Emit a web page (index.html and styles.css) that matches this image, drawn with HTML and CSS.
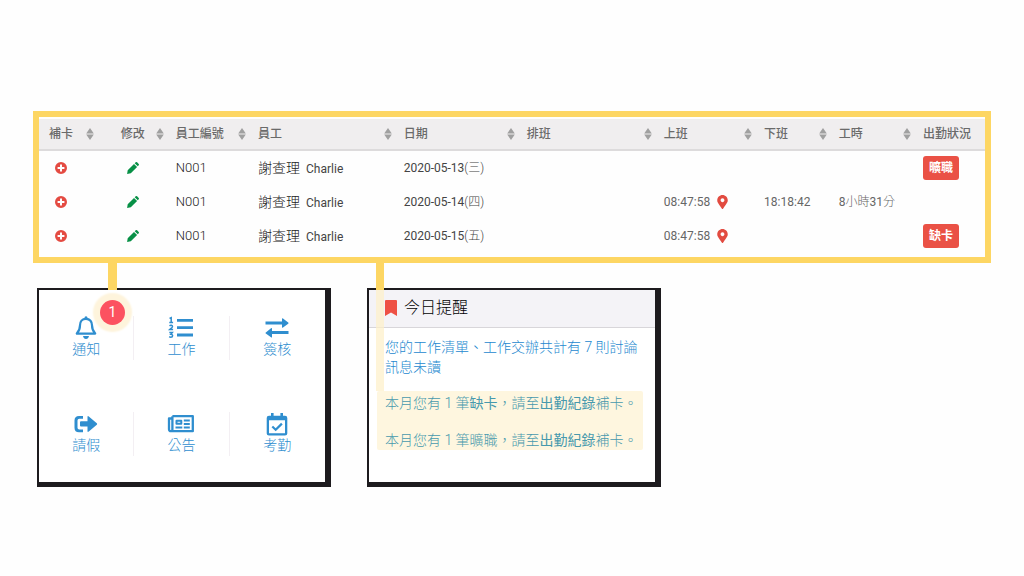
FILE: index.html
```html
<!DOCTYPE html>
<html lang="zh-Hant">
<head>
<meta charset="utf-8">
<meta name="viewport" content="width=device-width, initial-scale=1">
<title>出勤紀錄</title>
<link rel="stylesheet" href="styles.css">
</head>
<body>
<svg class="sprite" aria-hidden="true">
  <symbol id="sort" viewBox="0 0 8 12"><path d="M4 0L7.800 5.500H.2zM4 12L.2 6.500h7.600z"/></symbol>
  <symbol id="plus" viewBox="0 0 12 12"><path fill-rule="evenodd" d="M6 0a6 6 0 1 1 0 12A6 6 0 0 1 6 0zM5 2.600V5H2.600v2H5v2.400h2V7h2.400V5H7V2.600z"/></symbol>
  <symbol id="pencil" viewBox="0 0 12 12"><path d="M.1 11.900L.7 8.200 7 1.900l3.100 3.100L3.800 11.300zM7.700 1.200L8.700.3q.7-.6 1.400 0l1.600 1.600q.6.700 0 1.400L10.800 4.300z"/></symbol>
  <symbol id="pin" viewBox="0 0 384 512"><path fill-rule="evenodd" d="M172.268 501.670C26.970 291.031 0 269.413 0 192 0 85.961 85.961 0 192 0s192 85.961 192 192c0 77.413-26.970 99.031-172.268 309.670-9.535 13.774-29.930 13.773-39.464 0zM192 262c38.700 0 70-31.300 70-70s-31.300-70-70-70-70 31.300-70 70 31.300 70 70 70z"/></symbol>
  <symbol id="bell" viewBox="0 0 28 24"><path fill="none" stroke="currentColor" stroke-width="2.200" stroke-linejoin="round" d="M14 2.800c-4 0-6 3-6 6.400 0 4.300-1 6-3.200 8.400h18.400C21 15.200 20 13.500 20 9.200c0-3.400-2-6.400-6-6.400z"/><path d="M12.600 1q1.400-1.500 2.800 0v2h-2.800zM11 20h6q-.6 3-3 3t-3-3z"/></symbol>
  <symbol id="list" viewBox="0 0 28 24"><path d="M10 3h16v2.800H10zM10 10.300h16v2.800H10zM10 17.600h16v2.800H10z"/><path fill="none" stroke="currentColor" stroke-width="1.500" d="M2.500 2.400l1.700-.7v4.800M2.300 6.500h3.800M2.500 9.800c1.200-1 3-.6 3 .6 0 1-1 1.600-2.600 3h3.200M2.300 16.600h3l-1.400 1.700c2.300 0 2.300 2.900-.1 2.900-.7 0-1.200-.2-1.600-.5"/></symbol>
  <symbol id="swap" viewBox="0 0 28 24"><path d="M2.500 5.600H19V2.900q0-1.200 1-.4l5.200 4.100q.8.600 0 1.200L20 11.500q-1 .7-1-.4V8.600H2.500zM25.500 15H9v-2.200q0-1.300-1-.5l-5.200 4.100q-.8.600 0 1.200L8 21.300q1 .7 1-.4V18h16.500z"/></symbol>
  <symbol id="leave" viewBox="0 0 28 24"><path d="M11 4H7Q2.500 4 2.500 8.500v7.300q0 4.500 4.500 4.500h4v-2.800H7.300q-1.800 0-1.800-1.800V8.600q0-1.800 1.800-1.800H11z"/><path d="M9 9.300h6.500V5q0-1.600 1.300-.5l8 6.800q.8.700 0 1.400l-8 6.800q-1.300 1.100-1.300-.5v-4.500H9q-1 0-1-1v-3.200q0-1 1-1z"/></symbol>
  <symbol id="news" viewBox="0 0 28 24"><g fill="none" stroke="currentColor" stroke-width="2.300" stroke-linejoin="round"><path d="M5.400 4.200h20.400v15H4q-2 0-2-2V6.500h3.400M5.400 4.200v13q0 2-1.600 2"/><path stroke-width="2" d="M9.500 8.700h4.800v3.100H9.500zM16.800 8.500h6M16.800 12h6M8.500 15.500h6.800M16.800 15.500h6"/></g></symbol>
  <symbol id="calendar" viewBox="0 0 28 24"><path fill-rule="evenodd" d="M8 1h2.600v2.700h6.800V1H20v2.700h2q2.300 0 2.300 2.300v15.500q0 2-2.300 2H6q-2.300 0-2.300-2V6Q3.700 3.700 6 3.700h2zM6 8.200v13h16v-13z"/><path fill="none" stroke="currentColor" stroke-width="2.200" d="M9.300 14.500l3.400 3.300 6.200-6.200"/></symbol>
  <symbol id="bookmark" viewBox="0 0 12 16"><path d="M0 1Q0 0 1 0h10Q12 0 12 1V16l-6-3.500L0 16z"/></symbol>
</svg>

<main class="page">
  <section class="records">
    <table class="records-table">
      <colgroup>
        <col class="col-add"><col class="col-edit"><col class="col-id"><col class="col-name"><col class="col-date">
        <col class="col-shift"><col class="col-in"><col class="col-out"><col class="col-hours"><col class="col-status">
      </colgroup>
      <thead>
        <tr>
          <th><span class="head">補卡<svg class="sort"><use href="#sort"/></svg></span></th>
          <th><span class="head">修改<svg class="sort"><use href="#sort"/></svg></span></th>
          <th><span class="head">員工編號<svg class="sort"><use href="#sort"/></svg></span></th>
          <th><span class="head">員工<svg class="sort"><use href="#sort"/></svg></span></th>
          <th><span class="head">日期<svg class="sort"><use href="#sort"/></svg></span></th>
          <th><span class="head">排班<svg class="sort"><use href="#sort"/></svg></span></th>
          <th><span class="head">上班<svg class="sort"><use href="#sort"/></svg></span></th>
          <th><span class="head">下班<svg class="sort"><use href="#sort"/></svg></span></th>
          <th><span class="head">工時<svg class="sort"><use href="#sort"/></svg></span></th>
          <th><span class="head">出勤狀況</span></th>
        </tr>
      </thead>
      <tbody>
        <tr>
          <td><button class="icon-button add" aria-label="補卡"><svg><use href="#plus"/></svg></button></td>
          <td><button class="icon-button edit" aria-label="修改"><svg><use href="#pencil"/></svg></button></td>
          <td class="id">N001</td>
          <td class="name"><span class="name-zh">謝查理</span>Charlie</td>
          <td class="date">2020-05-13<span class="thin">(三)</span></td>
          <td></td><td></td><td></td><td></td>
          <td><span class="status">曠職</span></td>
        </tr>
        <tr>
          <td><button class="icon-button add" aria-label="補卡"><svg><use href="#plus"/></svg></button></td>
          <td><button class="icon-button edit" aria-label="修改"><svg><use href="#pencil"/></svg></button></td>
          <td class="id">N001</td>
          <td class="name"><span class="name-zh">謝查理</span>Charlie</td>
          <td class="date">2020-05-14<span class="thin">(四)</span></td>
          <td></td>
          <td><span class="clock">08:47:58<svg class="pin"><use href="#pin"/></svg></span></td>
          <td>18:18:42</td>
          <td>8<span class="thin">小時</span>31<span class="thin">分</span></td>
          <td></td>
        </tr>
        <tr>
          <td><button class="icon-button add" aria-label="補卡"><svg><use href="#plus"/></svg></button></td>
          <td><button class="icon-button edit" aria-label="修改"><svg><use href="#pencil"/></svg></button></td>
          <td class="id">N001</td>
          <td class="name"><span class="name-zh">謝查理</span>Charlie</td>
          <td class="date">2020-05-15<span class="thin">(五)</span></td>
          <td></td>
          <td><span class="clock">08:47:58<svg class="pin"><use href="#pin"/></svg></span></td>
          <td></td><td></td>
          <td><span class="status">缺卡</span></td>
        </tr>
      </tbody>
    </table>
  </section>

  <div class="panels">
    <nav class="panel shortcuts">
      <span class="connector connector-notice"></span>
      <a class="tile" href="#notice"><svg class="tile-icon"><use href="#bell"/></svg>通知<span class="count">1</span></a>
      <a class="tile" href="#work"><svg class="tile-icon"><use href="#list"/></svg>工作</a>
      <a class="tile" href="#sign"><svg class="tile-icon"><use href="#swap"/></svg>簽核</a>
      <a class="tile" href="#leave-request"><svg class="tile-icon"><use href="#leave"/></svg>請假</a>
      <a class="tile" href="#announcement"><svg class="tile-icon"><use href="#news"/></svg>公告</a>
      <a class="tile" href="#attendance"><svg class="tile-icon"><use href="#calendar"/></svg>考勤</a>
    </nav>

    <section class="panel reminders">
      <span class="connector connector-reminder"></span>
      <span class="trail"></span>
      <h2 class="reminders-title"><svg class="bookmark"><use href="#bookmark"/></svg>今日提醒</h2>
      <div class="reminders-body">
        <a class="reminder" href="#unread">您的工作清單、工作交辦共計有 7 則討論訊息未讀</a>
        <div class="highlight">
          <a class="reminder" href="#missing">本月您有 1 筆<span class="firm">缺卡</span>，請至<span class="firm">出勤紀錄</span>補卡。</a>
          <a class="reminder" href="#absent">本月您有 1 筆曠職，請至<span class="firm">出勤紀錄</span>補卡。</a>
        </div>
      </div>
    </section>
  </div>
</main>
</body>
</html>
```
FILE: styles.css
```css
* { box-sizing: border-box; }

body {
  margin: 0;
  background: #fefefe;
  color: #666;
  font: 12px/20px Roboto, "Noto Sans CJK TC", sans-serif;
}

svg { display: block; fill: currentColor; }
.sprite { position: absolute; width: 0; height: 0; }

.page {
  display: flex;
  flex-direction: column;
  gap: 25px;
  padding: 111px 33px 24px;
}

/* Attendance table */
.records {
  border: 6px solid #fdd663;
  padding: 2px 0 4px;
}

.records-table {
  width: 100%;
  table-layout: fixed;
  border-collapse: separate;
  border-spacing: 0;
}

.col-add { width: 6%; }
.col-edit { width: 7.4%; }
.col-id { width: 8.7%; }
.col-name { width: 15.4%; }
.col-date { width: 13%; }
.col-shift { width: 14.5%; }
.col-in { width: 10.6%; }
.col-out { width: 7.9%; }
.col-hours { width: 8.9%; }
.col-status { width: 7.6%; }

.records-table th {
  height: 32px;
  padding: 0 0 0 10px;
  background: #f0eeef;
  border-bottom: 2px solid #dddbdc;
  color: #6a6a6a;
  font-weight: 500;
  text-align: left;
  white-space: nowrap;
}

.records-table td {
  height: 34px;
  padding: 0 0 0 10px;
  white-space: nowrap;
}

.records-table th:nth-child(2),
.records-table td:nth-child(2) { padding-left: 25px; }

.head {
  display: flex;
  align-items: center;
  justify-content: space-between;
  padding-right: 2px;
}

.sort { width: 8px; height: 12px; color: #a0a0a0; }

.icon-button {
  display: block;
  border: 0;
  padding: 0 6px;
  background: none;
}

.icon-button svg { width: 12px; height: 12px; }
.records-table .add { color: #e44b42; }
.records-table .edit { color: #079046; }
.records-table .id { color: #222; font-size: 13px; font-weight: 300; }
.name { color: #444; }
.name-zh { margin-right: 6px; color: #222; font-size: 14px; font-weight: 300; }
.date { color: #444; }
.thin { font-weight: 300; }
.clock { display: flex; align-items: center; gap: 7px; }
.pin { width: 11px; height: 14px; color: #e24b40; }

.status {
  display: inline-block;
  padding: 2px 6px;
  border-radius: 3px;
  background: #ea5145;
  color: #fff;
  font-weight: 700;
}

/* Lower panels */
.panels {
  display: grid;
  grid-template-columns: repeat(3, 1fr);
  gap: 36px;
  padding-left: 4px;
}

.panel {
  position: relative;
  border: solid #1d1b1e;
  border-width: 2px 6px 5px 2px;
  background: #fff;
}

.connector {
  position: absolute;
  top: -27px;
  height: 27px;
  background: #fdd663;
}

.connector-notice { left: 69px; width: 9px; }
.connector-reminder { left: 7px; width: 8px; }

.shortcuts {
  display: grid;
  grid-template-columns: repeat(3, 1fr);
}

.tile {
  position: relative;
  display: flex;
  flex-direction: column;
  align-items: center;
  margin: 26px 0;
  border-right: 1px solid #f3eff3;
  color: #2f8ecf;
  font-size: 14px;
  font-weight: 300;
  line-height: 18px;
  text-decoration: none;
}

.tile:nth-of-type(3n) { border-right: 0; }
.tile-icon { width: 28px; height: 24px; }

.count {
  position: absolute;
  top: -16px;
  left: 61px;
  width: 25px;
  height: 25px;
  border-radius: 50%;
  background: #fc5260;
  box-shadow: 0 0 2px 7px #fef4dc;
  color: #fff;
  font-weight: 400;
  line-height: 25px;
  text-align: center;
}

.trail {
  position: absolute;
  top: 0;
  left: 7px;
  width: 8px;
  height: 101px;
  background: #fdf0c8;
  opacity: .7;
}

.reminders-title {
  display: flex;
  align-items: center;
  gap: 7px;
  margin: 0;
  padding: 8px 16px 9px;
  border-bottom: 1px solid #d8d6da;
  background: #f4f3f7;
  color: #000;
  font-size: 16px;
  font-weight: 300;
}

.bookmark { width: 12px; height: 16px; color: #ee5145; }
.reminders-body { padding: 9px 12px 32px 8px; }

.reminder {
  display: block;
  padding-left: 8px;
  color: #2488cf;
  font-size: 14px;
  font-weight: 300;
  text-decoration: none;
}

.highlight {
  display: grid;
  gap: 17px;
  margin-top: 14px;
  padding-top: 2px;
  border-radius: 2px;
  background: #fef6df;
}

.highlight .reminder { color: #4799ad; }
.firm { font-weight: 400; }
```
